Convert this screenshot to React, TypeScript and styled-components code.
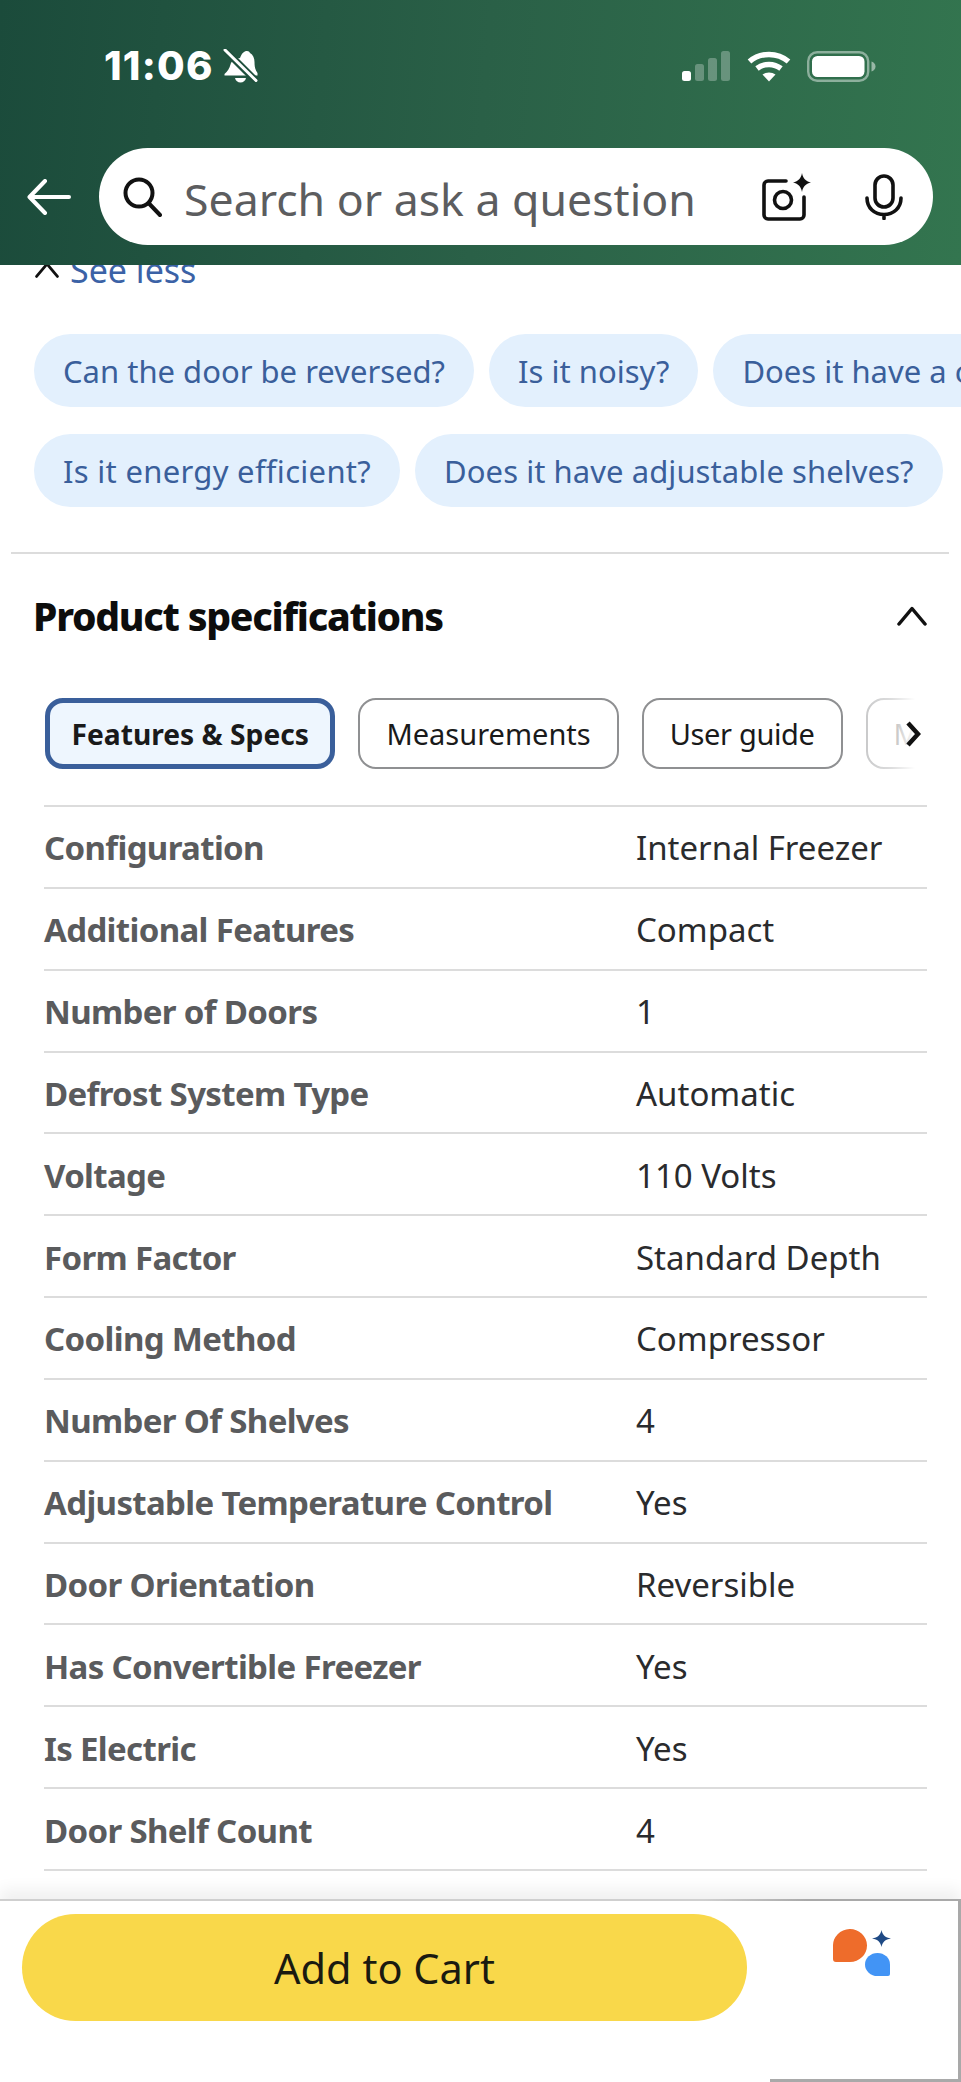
import React from "react";
import styled, { createGlobalStyle } from "styled-components";

const Global = createGlobalStyle`
  html, body { margin: 0; padding: 0; background: #fff; }
  body { font-family: "Noto Sans", "Open Sans", sans-serif; }
  * { box-sizing: border-box; }
`;

const Screen = styled.div`
  width: 961px;
  height: 2082px;
  display: flex;
  flex-direction: column;
  overflow: hidden;
  background: #fff;
`;

const Header = styled.header`
  position: relative;
  z-index: 2;
  height: 265px;
  flex: none;
  padding: 50px 28px 0 27px;
  background: linear-gradient(95deg, #1b4b3b 0%, #2a6047 50%, #33754f 100%);
  color: #fff;
`;

const StatusBar = styled.div`
  height: 98px;
  display: flex;
  justify-content: space-between;
  align-items: flex-start;
  padding: 0 57px 0 77px;
`;

const Clock = styled.div`
  display: flex;
  align-items: center;
  gap: 9px;
  height: 32px;
  font-family: "Inter", sans-serif;
  font-size: 40px;
  font-weight: 800;
  line-height: 32px;
  letter-spacing: 1.2px;
`;

const StatusIcons = styled.div`
  display: flex;
  align-items: center;
  gap: 16px;
  height: 32px;
`;

const SearchRow = styled.div`
  display: flex;
  align-items: center;
  gap: 28px;
`;

const SearchPill = styled.div`
  flex: 1;
  height: 97px;
  display: flex;
  align-items: center;
  padding: 0 30px 0 23px;
  background: #fff;
  border-radius: 49px;
`;

const Placeholder = styled.span`
  flex: 1;
  margin: 5px 0 0 22px;
  font-size: 44.6px;
  line-height: 1;
  color: #5c5d5f;
  white-space: nowrap;
`;

const PillIcons = styled.div`
  display: flex;
  align-items: center;
  gap: 54px;
`;

const Content = styled.main`
  flex: 1;
  min-height: 0;
  overflow: hidden;
  display: flex;
  flex-direction: column;
`;

const SeeLess = styled.div`
  display: flex;
  align-items: center;
  gap: 11px;
  height: 40px;
  margin: -15px 0 0 35px;
  font-size: 34px;
  line-height: 40px;
  color: #3b62a6;
`;

const ChipRow = styled.div<{ $top: number }>`
  display: flex;
  gap: 15px;
  padding-left: 34px;
  margin-top: ${(p) => p.$top}px;
  overflow: hidden;
`;

const Chip = styled.div<{ $track?: number }>`
  flex: none;
  height: 73px;
  padding: 0 29px;
  display: flex;
  align-items: center;
  border-radius: 37px;
  background: #e3f0fd;
  color: #3a5f9b;
  font-size: 31px;
  letter-spacing: ${(p) => p.$track ?? 0}px;
  white-space: nowrap;
`;

const Divider = styled.hr`
  margin: 45px 12px 0 11px;
  border: 0;
  height: 2px;
  background: #dcdcdc;
`;

const SectionHead = styled.div`
  display: flex;
  justify-content: space-between;
  align-items: center;
  height: 60px;
  margin-top: 32px;
  padding: 0 34px 0 33px;
`;

const SectionTitle = styled.h2`
  margin: 0;
  font-size: 39px;
  font-weight: 800;
  line-height: 60px;
  color: #0d0d0d;
  letter-spacing: -1.25px;
`;

const TabsWrap = styled.div`
  position: relative;
  display: flex;
  gap: 23px;
  margin: 52px 40px 0 45px;
  overflow: hidden;
`;

const Tab = styled.div<{ $active?: boolean; $track?: number }>`
  flex: none;
  height: 71px;
  display: flex;
  align-items: center;
  padding: 0 ${(p) => (p.$active ? 21.5 : 26)}px;
  border-radius: 18px;
  border: ${(p) => (p.$active ? "5px solid #3a5f9b" : "2px solid #8f9092")};
  background: ${(p) => (p.$active ? "#eef6fe" : "#fff")};
  color: #1a1a1a;
  font-size: ${(p) => (p.$active ? 28.2 : 29)}px;
  font-weight: ${(p) => (p.$active ? 700 : 400)};
  letter-spacing: ${(p) => p.$track ?? 0}px;
  white-space: nowrap;
`;

const TabFade = styled.div`
  position: absolute;
  top: 0;
  right: 0;
  width: 58px;
  height: 71px;
  display: flex;
  align-items: center;
  justify-content: flex-end;
  background: linear-gradient(90deg, rgba(255, 255, 255, 0.5), rgba(255, 255, 255, 0.7) 50%, #fff 90%);
`;

const SpecTable = styled.div`
  margin: 36px 34px 0 44px;
  border-top: 2px solid #dcdcdc;
`;

const SpecRow = styled.div`
  height: 81.85px;
  padding-top: 2px;
  display: grid;
  grid-template-columns: 592px 1fr;
  align-items: center;
  border-bottom: 2px solid #dcdcdc;
`;

const SpecLabel = styled.div`
  font-size: 33px;
  font-weight: 700;
  color: #5a5b5d;
  letter-spacing: -0.65px;
  white-space: nowrap;
`;

const SpecValue = styled.div`
  font-size: 33px;
  color: #2a2b2d;
  white-space: nowrap;
`;

const Footer = styled.footer`
  position: relative;
  flex: none;
  height: 183px;
  display: flex;
  align-items: flex-start;
  padding: 13px 0 0 22px;
  background: #fff;
  border-top: 2px solid #cfcfcf;
  box-shadow: 0 -10px 14px rgba(0, 0, 0, 0.06);
`;

const CartButton = styled.div`
  width: 725px;
  height: 107px;
  display: flex;
  align-items: center;
  justify-content: center;
  border-radius: 54px;
  background: #f9d84a;
  color: #1a1a10;
  font-size: 41.5px;
`;

const Assistant = styled.div`
  margin: 15px 0 0 86px;
  width: 58px;
  height: 48px;
`;

const FrameEdge = styled.div`
  position: absolute;
  right: 0;
  bottom: 0;
  top: -2px;
  width: 191px;
  border-right: 3px solid #a9a9a9;
  border-bottom: 3px solid #a9a9a9;
  pointer-events: none;

  &::before {
    content: "";
    position: absolute;
    top: 0;
    left: -66px;
    right: -3px;
    height: 2px;
    background: linear-gradient(90deg, #cfcfcf, #a9a9a9 40%);
  }
`;

const specs: [string, string][] = [
  ["Configuration", "Internal Freezer"],
  ["Additional Features", "Compact"],
  ["Number of Doors", "1"],
  ["Defrost System Type", "Automatic"],
  ["Voltage", "110 Volts"],
  ["Form Factor", "Standard Depth"],
  ["Cooling Method", "Compressor"],
  ["Number Of Shelves", "4"],
  ["Adjustable Temperature Control", "Yes"],
  ["Door Orientation", "Reversible"],
  ["Has Convertible Freezer", "Yes"],
  ["Is Electric", "Yes"],
  ["Door Shelf Count", "4"],
];

const BellOff = () => (
  <svg width="35" height="34" viewBox="0 0 35 34" style={{ flex: "none" }}>
    <path d="M17 9c2-5 4-7 7-7 1.500 0 2.500.8 3 2 3 1.800 4.500 5 4.500 9 0 5 .8 8 3 11v2.500H1.500V25c3-2.800 5-5.500 6-9.500 1-3.500 3-5.500 9.500-6.500z" fill="#fff" />
    <path d="M12 29h11c-.6 2.800-2.800 4.500-5.500 4.500S12.600 31.800 12 29z" fill="#fff" />
    <path d="M1 0 33 32" stroke="#1f503d" strokeWidth="7" />
    <path d="M2 1 33 31.500" stroke="#fff" strokeWidth="3" strokeLinecap="round" />
  </svg>
);

const Signal = () => (
  <svg width="50" height="30" viewBox="0 0 50 30" fill="#fff">
    <rect x="1" y="20" width="9" height="10" rx="2.500" />
    <rect x="14" y="13" width="9" height="17" rx="2.500" opacity=".28" />
    <rect x="27" y="7" width="9" height="23" rx="2.500" opacity=".28" />
    <rect x="40" y="0" width="9" height="30" rx="2.500" opacity=".28" />
  </svg>
);

const Wifi = () => (
  <svg width="44" height="31" viewBox="0 0 44 31" fill="none" stroke="#fff" strokeWidth="5.500">
    <path d="M2.500 10.500C13.500 1 30.500 1 41.500 10.500" />
    <path d="M10 17.500c7-5.500 17-5.500 24 0" />
    <path d="M22 30.500l-6.500-7c3.700-2.800 9.300-2.800 13 0z" fill="#fff" stroke="none" />
  </svg>
);

const Battery = () => (
  <svg width="69" height="31" viewBox="0 0 69 31">
    <rect x="1.200" y="1.200" width="60" height="28.600" rx="9" fill="none" stroke="#fff" strokeOpacity=".45" strokeWidth="2.400" />
    <rect x="5" y="5" width="52.500" height="21" rx="5.500" fill="#fff" />
    <path d="M64.500 10.500c2.500.8 4 2.700 4 5s-1.500 4.200-4 5z" fill="#fff" fillOpacity=".5" />
  </svg>
);

const BackArrow = () => (
  <svg width="44" height="36" viewBox="0 0 44 36" fill="none" stroke="#fff" strokeWidth="4" strokeLinecap="round" strokeLinejoin="round" style={{ flex: "none" }}>
    <path d="M42 18H3M18 2 2.500 18 18 34" />
  </svg>
);

const SearchIcon = () => (
  <svg width="40" height="40" viewBox="0 0 40 40" fill="none" stroke="#111" strokeWidth="4" strokeLinecap="round" style={{ flex: "none" }}>
    <circle cx="17" cy="16" r="13.500" />
    <path d="M27 26.500 38 38" />
  </svg>
);

const CameraSpark = () => (
  <svg width="49" height="48" viewBox="0 0 49 48" fill="none">
    <path d="M24 8H6a4 4 0 0 0-4 4v30a4 4 0 0 0 4 4h32a4 4 0 0 0 4-4V24" stroke="#111" strokeWidth="3.600" strokeLinecap="round" />
    <circle cx="21" cy="27" r="8.500" stroke="#111" strokeWidth="3.600" />
    <path d="M40 0c1 5.500 3.500 8 9 9.500-5.500 1.500-8 4-9 9.500-1-5.500-3.500-8-9-9.500 5.500-1.500 8-4 9-9.500z" fill="#111" />
  </svg>
);

const Mic = () => (
  <svg width="38" height="46" viewBox="0 0 38 46" fill="none" stroke="#111" strokeWidth="3.600" strokeLinecap="round">
    <rect x="10" y="2" width="18" height="31" rx="9" />
    <path d="M2 24c0 10 7.500 16.500 17 16.500S36 34 36 24M19 41v3.500" />
  </svg>
);

const ChevronUp = ({ w, h, sw }: { w: number; h: number; sw: number }) => (
  <svg width={w} height={h} viewBox="0 0 30 20" fill="none" stroke="#111" strokeWidth={sw} strokeLinecap="round" strokeLinejoin="round" style={{ flex: "none" }}>
    <path d="M2 18 15 2.500 28 18" />
  </svg>
);

const ChevronRight = () => (
  <svg width="15" height="26" viewBox="0 0 15 26" fill="none" stroke="#111" strokeWidth="4.500" strokeLinejoin="miter">
    <path d="M2 2l10 11L2 24" />
  </svg>
);

const AssistantMark = () => (
  <svg width="58" height="48" viewBox="0 0 58 48">
    <path d="M3 33Q0 33 0 30V17A17 16.500 0 1 1 17 33Z" fill="#ee6c2b" />
    <path d="M55 47H44.500A12.500 11.500 0 1 1 57 35.500V45Q57 47 55 47Z" fill="#4294f5" />
    <path d="M48.500 1c1 5 3.500 7.500 9.500 8.500-6 1-8.500 3.500-9.500 8.500-1-5-3.500-7.500-9.500-8.500 6-1 8.500-3.500 9.500-8.500z" fill="#1f4a85" />
  </svg>
);

export default function App() {
  return (
    <Screen>
      <Global />
      <Header>
        <StatusBar>
          <Clock>
            <span>11:06</span>
            <BellOff />
          </Clock>
          <StatusIcons>
            <Signal />
            <Wifi />
            <Battery />
          </StatusIcons>
        </StatusBar>
        <SearchRow>
          <BackArrow />
          <SearchPill>
            <SearchIcon />
            <Placeholder>Search or ask a question</Placeholder>
            <PillIcons>
              <CameraSpark />
              <Mic />
            </PillIcons>
          </SearchPill>
        </SearchRow>
      </Header>
      <Content>
        <SeeLess>
          <ChevronUp w={24} h={16} sw={3.500} />
          <span>See less</span>
        </SeeLess>
        <ChipRow $top={44}>
          <Chip>Can the door be reversed?</Chip>
          <Chip>Is it noisy?</Chip>
          <Chip>Does it have a child lock?</Chip>
        </ChipRow>
        <ChipRow $top={27}>
          <Chip $track={0.3}>Is it energy efficient?</Chip>
          <Chip $track={0.06}>Does it have adjustable shelves?</Chip>
        </ChipRow>
        <Divider />
        <SectionHead>
          <SectionTitle>Product specifications</SectionTitle>
          <ChevronUp w={30} h={20} sw={3.500} />
        </SectionHead>
        <TabsWrap>
          <Tab $active>Features &amp; Specs</Tab>
          <Tab>Measurements</Tab>
          <Tab $track={-0.35}>User guide</Tab>
          <Tab>More</Tab>
          <TabFade>
            <ChevronRight />
          </TabFade>
        </TabsWrap>
        <SpecTable>
          {specs.map(([label, value]) => (
            <SpecRow key={label}>
              <SpecLabel>{label}</SpecLabel>
              <SpecValue>{value}</SpecValue>
            </SpecRow>
          ))}
        </SpecTable>
      </Content>
      <Footer>
        <CartButton>Add to Cart</CartButton>
        <Assistant>
          <AssistantMark />
        </Assistant>
        <FrameEdge />
      </Footer>
    </Screen>
  );
}
